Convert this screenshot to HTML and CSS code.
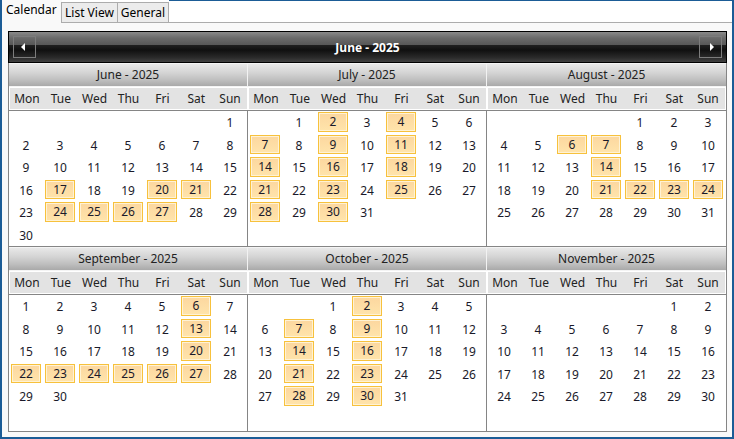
FILE: index.html
```html
<!DOCTYPE html>
<html>
<head>
<meta charset="utf-8">
<link rel="stylesheet" href="styles.css">
</head>
<body>
<div class="window">
  <div class="tabs">
    <div class="tab active">Calendar</div>
    <div class="tab">List View</div>
    <div class="tab">General</div>
    <div class="tab-fill"></div>
  </div>
  <div class="content">
    <div class="calendar">
      <div class="cal-head">
        <div class="nav prev"><span class="tri-left"></span></div>
        <div class="cal-title">June - 2025</div>
        <div class="nav next"><span class="tri-right"></span></div>
      </div>
      <div class="months">
        <div class="month top sep">
          <div class="month-title">June - 2025</div>
          <div class="dow"><span>Mon</span><span>Tue</span><span>Wed</span><span>Thu</span><span>Fri</span><span>Sat</span><span>Sun</span></div>
          <div class="days">
            <span></span><span></span><span></span><span></span><span></span><span></span><span>1</span>
            <span>2</span><span>3</span><span>4</span><span>5</span><span>6</span><span>7</span><span>8</span>
            <span>9</span><span>10</span><span>11</span><span>12</span><span>13</span><span>14</span><span>15</span>
            <span>16</span><span class="hl">17</span><span>18</span><span>19</span><span class="hl">20</span><span class="hl">21</span><span>22</span>
            <span>23</span><span class="hl">24</span><span class="hl">25</span><span class="hl">26</span><span class="hl">27</span><span>28</span><span>29</span>
            <span>30</span>
          </div>
        </div>
        <div class="month top sep">
          <div class="month-title">July - 2025</div>
          <div class="dow"><span>Mon</span><span>Tue</span><span>Wed</span><span>Thu</span><span>Fri</span><span>Sat</span><span>Sun</span></div>
          <div class="days">
            <span></span><span>1</span><span class="hl">2</span><span>3</span><span class="hl">4</span><span>5</span><span>6</span>
            <span class="hl">7</span><span>8</span><span class="hl">9</span><span>10</span><span class="hl">11</span><span>12</span><span>13</span>
            <span class="hl">14</span><span>15</span><span class="hl">16</span><span>17</span><span class="hl">18</span><span>19</span><span>20</span>
            <span class="hl">21</span><span>22</span><span class="hl">23</span><span>24</span><span class="hl">25</span><span>26</span><span>27</span>
            <span class="hl">28</span><span>29</span><span class="hl">30</span><span>31</span>
          </div>
        </div>
        <div class="month top">
          <div class="month-title">August - 2025</div>
          <div class="dow"><span>Mon</span><span>Tue</span><span>Wed</span><span>Thu</span><span>Fri</span><span>Sat</span><span>Sun</span></div>
          <div class="days">
            <span></span><span></span><span></span><span></span><span>1</span><span>2</span><span>3</span>
            <span>4</span><span>5</span><span class="hl">6</span><span class="hl">7</span><span>8</span><span>9</span><span>10</span>
            <span>11</span><span>12</span><span>13</span><span class="hl">14</span><span>15</span><span>16</span><span>17</span>
            <span>18</span><span>19</span><span>20</span><span class="hl">21</span><span class="hl">22</span><span class="hl">23</span><span class="hl">24</span>
            <span>25</span><span>26</span><span>27</span><span>28</span><span>29</span><span>30</span><span>31</span>
          </div>
        </div>
        <div class="month sep">
          <div class="month-title">September - 2025</div>
          <div class="dow"><span>Mon</span><span>Tue</span><span>Wed</span><span>Thu</span><span>Fri</span><span>Sat</span><span>Sun</span></div>
          <div class="days">
            <span>1</span><span>2</span><span>3</span><span>4</span><span>5</span><span class="hl">6</span><span>7</span>
            <span>8</span><span>9</span><span>10</span><span>11</span><span>12</span><span class="hl">13</span><span>14</span>
            <span>15</span><span>16</span><span>17</span><span>18</span><span>19</span><span class="hl">20</span><span>21</span>
            <span class="hl">22</span><span class="hl">23</span><span class="hl">24</span><span class="hl">25</span><span class="hl">26</span><span class="hl">27</span><span>28</span>
            <span>29</span><span>30</span>
          </div>
        </div>
        <div class="month sep">
          <div class="month-title">October - 2025</div>
          <div class="dow"><span>Mon</span><span>Tue</span><span>Wed</span><span>Thu</span><span>Fri</span><span>Sat</span><span>Sun</span></div>
          <div class="days">
            <span></span><span></span><span>1</span><span class="hl">2</span><span>3</span><span>4</span><span>5</span>
            <span>6</span><span class="hl">7</span><span>8</span><span class="hl">9</span><span>10</span><span>11</span><span>12</span>
            <span>13</span><span class="hl">14</span><span>15</span><span class="hl">16</span><span>17</span><span>18</span><span>19</span>
            <span>20</span><span class="hl">21</span><span>22</span><span class="hl">23</span><span>24</span><span>25</span><span>26</span>
            <span>27</span><span class="hl">28</span><span>29</span><span class="hl">30</span><span>31</span>
          </div>
        </div>
        <div class="month">
          <div class="month-title">November - 2025</div>
          <div class="dow"><span>Mon</span><span>Tue</span><span>Wed</span><span>Thu</span><span>Fri</span><span>Sat</span><span>Sun</span></div>
          <div class="days">
            <span></span><span></span><span></span><span></span><span></span><span>1</span><span>2</span>
            <span>3</span><span>4</span><span>5</span><span>6</span><span>7</span><span>8</span><span>9</span>
            <span>10</span><span>11</span><span>12</span><span>13</span><span>14</span><span>15</span><span>16</span>
            <span>17</span><span>18</span><span>19</span><span>20</span><span>21</span><span>22</span><span>23</span>
            <span>24</span><span>25</span><span>26</span><span>27</span><span>28</span><span>29</span><span>30</span>
          </div>
        </div>
      </div>
    </div>
  </div>
</div>
</body>
</html>
```
FILE: styles.css
```css
* { box-sizing: border-box; }
html, body { margin: 0; padding: 0; background: #ffffff; }
body {
  font-family: "Noto Sans", "Open Sans", "DejaVu Sans", sans-serif;
  font-size: 12px;
  color: #1a1a1a;
}
.window {
  width: 734px;
  height: 439px;
  border-left: 2px solid #1b5c96;
  border-right: 2px solid #1b5c96;
  border-bottom: 2px solid #1b5c96;
  background: #f9f9f9;
  display: flex;
  flex-direction: column;
}
.tabs {
  display: flex;
  align-items: flex-end;
  height: 23px;
  background: #ffffff;
}
.tab {
  height: 21px;
  padding: 0 3px;
  line-height: 19px;
  border: 1px solid #acacac;
  background: #ececec;
  color: #000;
  margin-left: -1px;
}
.tab.active {
  height: 23px;
  margin-left: 0;
  width: 60px;
  padding: 0 4px;
  line-height: 20px;
  border: none;
  background: #f9f9f9;
}
.tab-fill {
  flex: 1;
  height: 23px;
  border-top: 1px solid #1b5c96;
  border-bottom: 1px solid #acacac;
}
.content {
  flex: 1;
  padding: 8px 0 0 6px;
}
.calendar {
  width: 719px;
  height: 401px;
  display: flex;
  flex-direction: column;
}
.cal-head {
  height: 32px;
  border: 1px solid #000;
  background: linear-gradient(#8a8a8a 0%, #6a6a6a 20%, #585858 42%, #1f1f1f 44%, #101010 60%, #2a2a2a 85%, #404040 100%);
  display: flex;
  align-items: center;
  padding: 0 4px;
}
.nav {
  width: 23px;
  height: 22px;
  border: 1px solid #7c7c7c;
  display: flex;
  align-items: center;
  justify-content: center;
}
.tri-left {
  width: 0; height: 0;
  border-top: 4px solid transparent;
  border-bottom: 4px solid transparent;
  border-right: 4px solid #fff;
  margin-left: -4px;
}
.tri-right {
  width: 0; height: 0;
  border-top: 4px solid transparent;
  border-bottom: 4px solid transparent;
  border-left: 4px solid #fff;
  margin-left: 2px;
}
.cal-title {
  flex: 1;
  text-align: center;
  color: #fff;
  font-weight: bold;
  font-size: 12px;
}
.months {
  flex: 1;
  display: grid;
  grid-template-columns: repeat(3, 239px);
  grid-template-rows: 184px 184px;
  border: 1px solid #858585;
  border-top: none;
  background: #fff;
}
.month {
  display: flex;
  flex-direction: column;
  padding-top: 1px;
  background: #f4f4f4;
}
.month.top { border-bottom: 1px solid #858585; }
.month-title {
  height: 22px;
  line-height: 22px;
  text-align: center;
  color: #222;
  background: linear-gradient(#e8e8e8 0%, #d4d4d4 40%, #bdbdbd 75%, #a9a9a9 100%);
}
.month.sep .month-title { border-right: 1px solid #f2f2f2; }
.dow {
  margin-top: 1px;
  height: 23px;
  border: 1px solid #fff;
  background: #e3e3e3;
  display: grid;
  grid-template-columns: repeat(7, 1fr);
  align-items: center;
  text-align: center;
  color: #222;
}
.days {
  flex: 1;
  border-top: 1px solid #858585;
  background: #fff;
  display: grid;
  grid-template-columns: repeat(7, 34px);
  grid-auto-rows: 22.5px;
  align-content: start;
}
.month.sep .days { border-right: 1px solid #858585; }
.days span {
  display: flex;
  align-items: center;
  justify-content: center;
  color: #1a1a2a;
  padding-top: 1px;
}
.days span.hl {
  margin: 1px 2px 2px 2px;
  padding-top: 0;
  border: 1px solid #f7c13c;
  box-shadow: inset 0 0 0 1px #fff2d4;
  background: linear-gradient(#fcd79f, #ffe4ab);
}
```
